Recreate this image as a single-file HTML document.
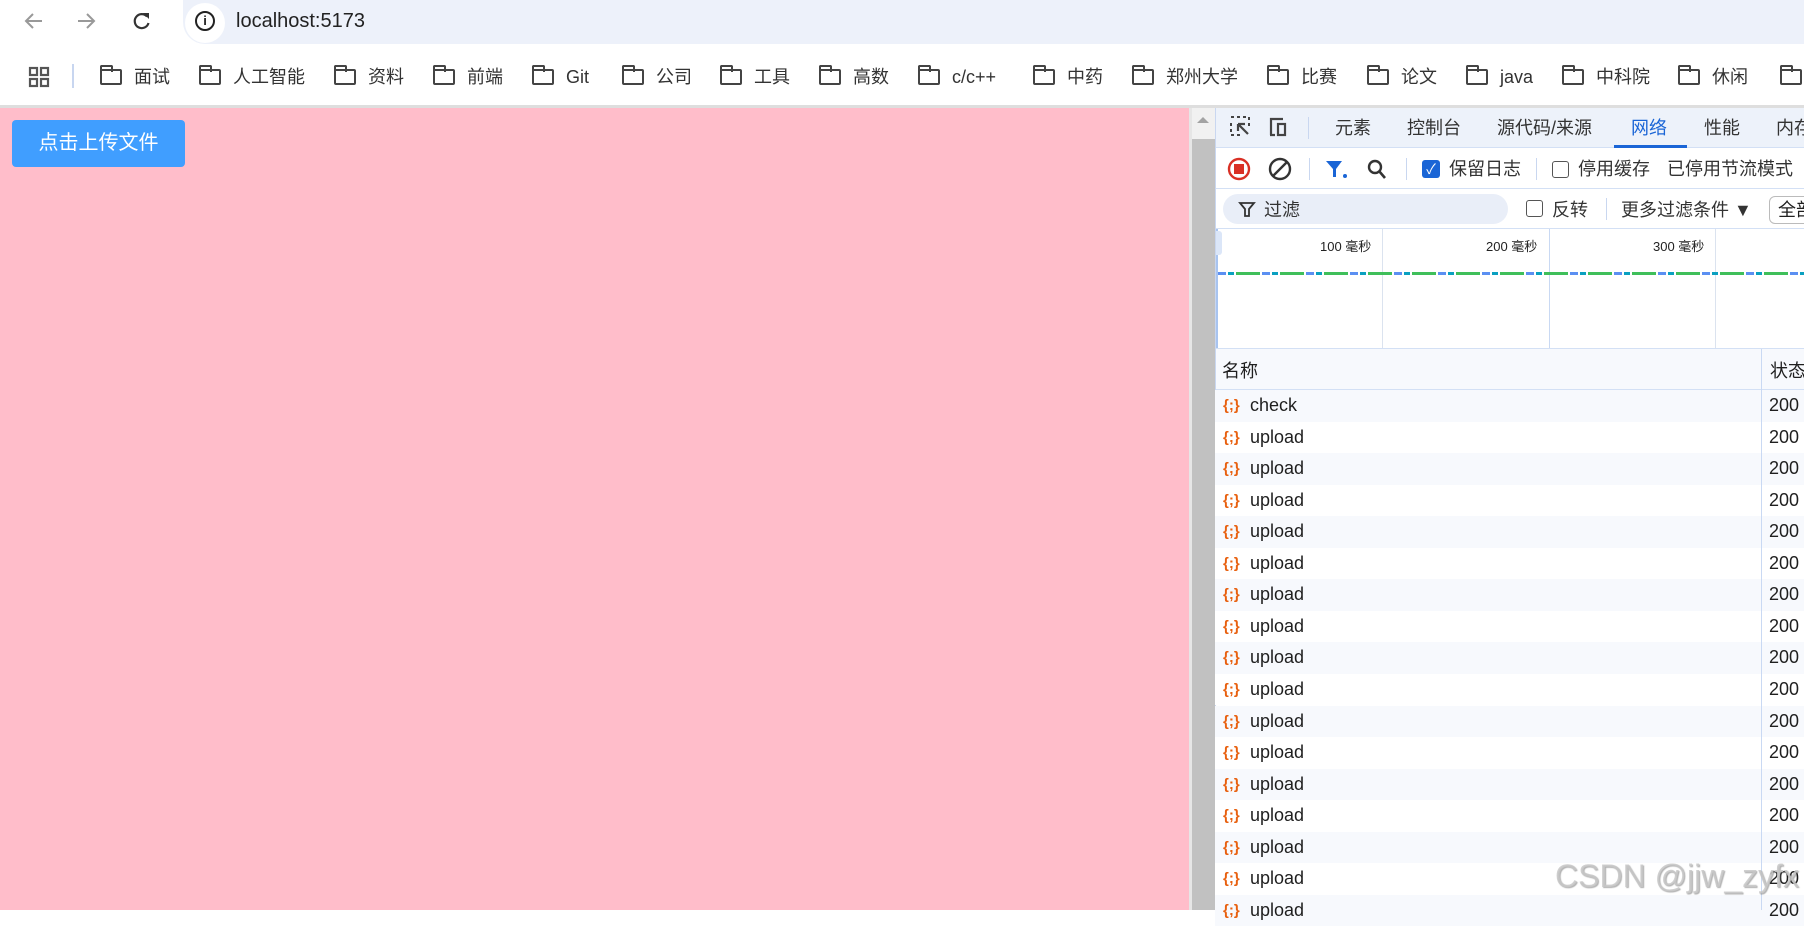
<!DOCTYPE html>
<html><head><meta charset="utf-8"><style>
*{margin:0;padding:0;box-sizing:border-box}
body{width:1804px;height:910px;overflow:hidden;background:#fff;font-family:"Liberation Sans","Noto Sans CJK SC",sans-serif;position:relative;color:#1f1f1f}
.abs{position:absolute;white-space:nowrap}
.addr{left:183px;top:0;width:1640px;height:44px;background:#edf1fa;border-radius:0 0 0 22px}
.bm{position:absolute;top:64px;font-size:18px;color:#333;white-space:nowrap;line-height:26px}
.fold{position:absolute;top:69px;width:22px;height:16px;border:2.2px solid #444;border-radius:2px}
.fold:before{content:"";position:absolute;left:-2px;top:-6px;width:9px;height:5px;border:2.2px solid #444;border-bottom:none;border-radius:2px 2px 0 0}
.pink{left:0;top:108px;width:1189px;height:802px;background:#ffbdca}
.btn{left:12px;top:120px;width:173px;height:47px;background:#409eff;border-radius:4px;color:#fff;font-size:20px;line-height:47px;text-align:center}
.tab{position:absolute;top:115px;font-size:18px;color:#333;line-height:26px;white-space:nowrap}
.row{position:absolute;left:1215px;width:589px;height:31.55px;font-size:18px;line-height:31.55px;white-space:nowrap;overflow:hidden}
.row .ic{position:absolute;left:8px;color:#e8600f;font-size:15px;font-weight:bold}
.row .n{position:absolute;left:35px}
.row .s{position:absolute;left:554px}
.cb{position:absolute;width:17px;height:17px;border:1.6px solid #555;border-radius:3px}
</style></head><body>
<svg class="abs" style="left:20px;top:10px" width="130" height="26" viewBox="0 0 130 26">
<path d="M22 11H6M13 4L6 11l7 7" stroke="#999" stroke-width="2" fill="none"/>
<path d="M58 11h16M67 4l7 7-7 7" stroke="#999" stroke-width="2" fill="none"/>
</svg>
<svg class="abs" style="left:130px;top:10px" width="24" height="24" viewBox="0 0 24 24"><path d="M17 6.5A7 7 0 1 0 18.5 13" stroke="#333" stroke-width="2.2" fill="none"/><path d="M13 3h6v6z" fill="#333"/></svg>
<div class="abs addr"></div>
<div class="abs" style="left:185px;top:3px;width:40px;height:40px;border-radius:20px;background:#fff"></div>
<div class="abs" style="left:195px;top:11px;width:20px;height:20px;border:2px solid #222;border-radius:10px;font-size:13px;font-weight:bold;text-align:center;line-height:16px">i</div>
<div class="abs" style="left:236px;top:10px;font-size:20px;color:#222">localhost:5173</div>
<svg class="abs" style="left:28px;top:66px" width="22" height="22"><g fill="none" stroke="#555" stroke-width="2.2"><rect x="2" y="2" width="7" height="7"/><rect x="13" y="2" width="7" height="7"/><rect x="2" y="13" width="7" height="7"/><rect x="13" y="13" width="7" height="7"/></g></svg>
<div class="abs" style="left:72px;top:64px;width:2px;height:24px;background:#c8d6f0"></div>
<div class="fold" style="left:100px"></div><div class="bm" style="left:134px">面试</div>
<div class="fold" style="left:199px"></div><div class="bm" style="left:233px">人工智能</div>
<div class="fold" style="left:334px"></div><div class="bm" style="left:368px">资料</div>
<div class="fold" style="left:433px"></div><div class="bm" style="left:467px">前端</div>
<div class="fold" style="left:532px"></div><div class="bm" style="left:566px">Git</div>
<div class="fold" style="left:622px"></div><div class="bm" style="left:656px">公司</div>
<div class="fold" style="left:720px"></div><div class="bm" style="left:754px">工具</div>
<div class="fold" style="left:819px"></div><div class="bm" style="left:853px">高数</div>
<div class="fold" style="left:918px"></div><div class="bm" style="left:952px">c/c++</div>
<div class="fold" style="left:1033px"></div><div class="bm" style="left:1067px">中药</div>
<div class="fold" style="left:1132px"></div><div class="bm" style="left:1166px">郑州大学</div>
<div class="fold" style="left:1267px"></div><div class="bm" style="left:1301px">比赛</div>
<div class="fold" style="left:1367px"></div><div class="bm" style="left:1401px">论文</div>
<div class="fold" style="left:1466px"></div><div class="bm" style="left:1500px">java</div>
<div class="fold" style="left:1562px"></div><div class="bm" style="left:1596px">中科院</div>
<div class="fold" style="left:1678px"></div><div class="bm" style="left:1712px">休闲</div>
<div class="fold" style="left:1780px"></div>
<div class="abs" style="left:0;top:105px;width:1804px;height:3px;background:#dedede"></div>
<div class="abs pink"></div>
<div class="abs btn">点击上传文件</div>
<div class="abs" style="left:1189px;top:108px;width:26px;height:802px;background:#c1c1c1;border-left:3px solid #e6e6e6"></div>
<div class="abs" style="left:1192px;top:108px;width:23px;height:31px;background:#f1f1f1"></div>
<div class="abs" style="left:1197px;top:117px;border-left:6px solid transparent;border-right:6px solid transparent;border-bottom:6px solid #a3a3a3"></div>
<div class="abs" style="left:1215px;top:108px;width:589px;height:802px;background:#fff;border-left:1px solid #c9d7f0"></div>
<div class="abs" style="left:1216px;top:108px;width:588px;height:40px;background:#edf2fa;border-bottom:1px solid #d3e0f5"></div>
<svg class="abs" style="left:1228px;top:114px" width="60" height="28"><path d="M3 3h3M9 3h3M15 3h3M3 9v3M3 15v3M3 21h3M9 21h3M21 3v3M21 9v3" stroke="#444" stroke-width="2"/><path d="M10 10l10 10M10 10h7M10 10v7" stroke="#444" stroke-width="2.2" fill="none"/><path d="M43 21V5h12M47 21h-5" stroke="#444" stroke-width="2.2" fill="none"/><rect x="50" y="10" width="7" height="11" fill="none" stroke="#444" stroke-width="2.2"/></svg>
<div class="abs" style="left:1308px;top:117px;width:1px;height:22px;background:#c9d7f0"></div>
<div class="tab" style="left:1335px">元素</div>
<div class="tab" style="left:1407px">控制台</div>
<div class="tab" style="left:1497px">源代码/来源</div>
<div class="tab" style="left:1631px;color:#1a65d6">网络</div>
<div class="tab" style="left:1704px">性能</div>
<div class="tab" style="left:1776px">内存</div>
<div class="abs" style="left:1614px;top:145px;width:73px;height:3px;background:#1a65d6"></div>
<div class="abs" style="left:1216px;top:188px;width:588px;height:1px;background:#d3e0f5"></div>
<svg class="abs" style="left:1227px;top:156px" width="220" height="26"><circle cx="12" cy="13" r="10" fill="none" stroke="#d93025" stroke-width="2.4"/><rect x="7" y="8" width="10" height="10" fill="#d93025"/><circle cx="53" cy="13" r="10" fill="none" stroke="#333" stroke-width="2.4"/><path d="M46 20l14-14" stroke="#333" stroke-width="2.4"/><path d="M99 5h16l-6 8v8h-3v-8z" fill="#1a65d6"/><circle cx="118" cy="20" r="2" fill="#1a65d6"/><circle cx="148" cy="11" r="6" fill="none" stroke="#333" stroke-width="2.4"/><path d="M152 15l6 7" stroke="#333" stroke-width="2.6"/></svg>
<div class="abs" style="left:1309px;top:158px;width:1px;height:22px;background:#c9d7f0"></div>
<div class="abs" style="left:1406px;top:158px;width:1px;height:22px;background:#c9d7f0"></div>
<div class="abs" style="left:1422px;top:160px;width:18px;height:18px;background:#1a65d6;border-radius:3px;color:#fff;font-size:14px;text-align:center;line-height:18px">✓</div>
<div class="abs" style="left:1449px;top:155px;font-size:18px;color:#333">保留日志</div>
<div class="abs" style="left:1536px;top:158px;width:1px;height:22px;background:#c9d7f0"></div>
<div class="cb" style="left:1552px;top:161px"></div>
<div class="abs" style="left:1578px;top:155px;font-size:18px;color:#333">停用缓存</div>
<div class="abs" style="left:1667px;top:155px;font-size:18px;color:#333">已停用节流模式</div>
<div class="abs" style="left:1223px;top:194px;width:285px;height:30px;background:#e9eef8;border-radius:15px"></div>
<svg class="abs" style="left:1238px;top:200px" width="18" height="18"><path d="M2 3h14l-5 6v7h-4V9z" fill="none" stroke="#333" stroke-width="1.8"/></svg>
<div class="abs" style="left:1264px;top:196px;font-size:18px;color:#333">过滤</div>
<div class="cb" style="left:1526px;top:200px"></div>
<div class="abs" style="left:1552px;top:196px;font-size:18px;color:#333">反转</div>
<div class="abs" style="left:1606px;top:198px;width:1px;height:22px;background:#c9d7f0"></div>
<div class="abs" style="left:1621px;top:196px;font-size:18px;color:#333">更多过滤条件 ▼</div>
<div class="abs" style="left:1769px;top:196px;width:50px;height:28px;border:1px solid #bbb;border-radius:6px;font-size:18px;padding-left:8px;line-height:26px">全部</div>
<div class="abs" style="left:1216px;top:228px;width:588px;height:1px;background:#d3e0f5"></div>
<div class="abs" style="left:1216px;top:229px;width:2px;height:120px;background:#a8c4f0"></div>
<div class="abs" style="left:1216px;top:231px;width:6px;height:24px;background:#dbe6f8;border-radius:0 3px 3px 0"></div>
<div class="abs" style="left:1382px;top:229px;width:1px;height:120px;background:#dbe3ef"></div>
<div class="abs" style="left:1549px;top:229px;width:1px;height:120px;background:#c9d9f3"></div>
<div class="abs" style="left:1715px;top:229px;width:1px;height:120px;background:#dbe3ef"></div>
<div class="abs" style="left:1320px;top:236px;font-size:13px;color:#222">100 毫秒</div>
<div class="abs" style="left:1486px;top:236px;font-size:13px;color:#222">200 毫秒</div>
<div class="abs" style="left:1653px;top:236px;font-size:13px;color:#222">300 毫秒</div>
<div class="abs" style="left:1218px;top:272px;width:586px;height:3px;background:repeating-linear-gradient(90deg,#5b8ff2 0 8px,#fff 8px 10px,#0aa0c0 10px 16px,#fff 16px 18px,#3fbf5a 18px 42px,#fff 42px 44px)"></div>
<div class="abs" style="left:1216px;top:348px;width:588px;height:1px;background:#d3e0f5"></div>
<div class="abs" style="left:1216px;top:349px;width:588px;height:41px;background:#f7f9fd;border-bottom:1px solid #d3e0f5"></div>
<div class="abs" style="left:1222px;top:357px;font-size:18px">名称</div>
<div class="abs" style="left:1770px;top:357px;font-size:18px">状态</div>
<div id="rows"></div>
<div class="abs" style="left:1761px;top:349px;width:1px;height:561px;background:#c9d9f3"></div>
<div class="abs" style="left:1555px;top:858px;font-size:32px;color:rgba(200,200,200,.85);text-shadow:1px 1px 1px rgba(100,100,100,.5)">CSDN @jjw_zyfx</div>
<script>
var h='',names=['check'];for(var i=1;i<17;i++)names.push('upload');
for(var i=0;i<17;i++){var t=390+31.55*i;h+='<div class="row" style="top:'+t+'px;background:'+(i%2?'#fff':'#f7f9fd')+'"><span class="ic">{;}</span><span class="n">'+names[i]+'</span><span class="s">200</span></div>';}
document.getElementById('rows').innerHTML=h;
</script>
</body></html>
